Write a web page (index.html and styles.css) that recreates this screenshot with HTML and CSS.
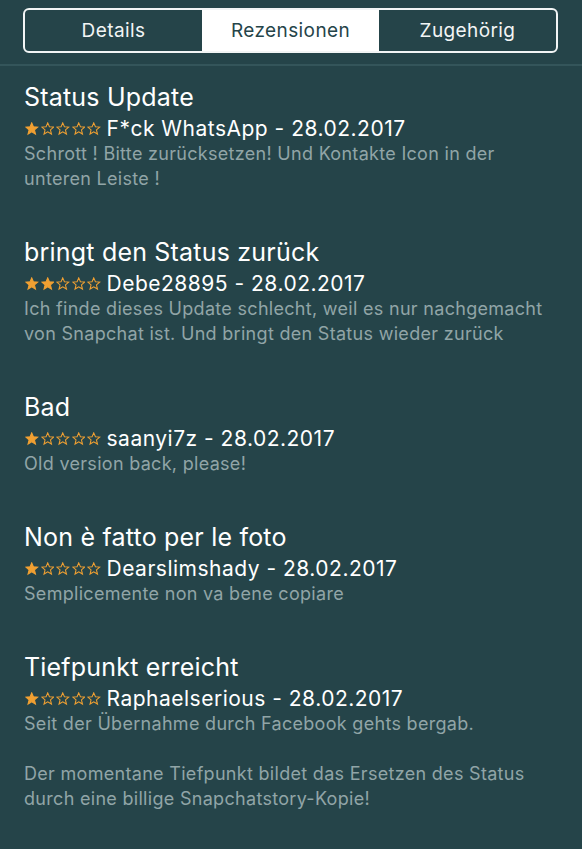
FILE: index.html
```html
<!DOCTYPE html>
<html lang="de">
<head>
    <meta charset="UTF-8">
    <meta name="viewport" content="width=device-width, initial-scale=1.0">
    <title>Rezensionen</title>
    <link rel="stylesheet" href="styles.css">
</head>
<body>
    <svg width="0" height="0" class="defs">
        <defs>
            <path id="star" d="M6.5 0.8 L8.1 4.6 L12.2 4.9 L9.1 7.6 L10.1 11.6 L6.5 9.4 L2.9 11.6 L3.9 7.6 L0.8 4.9 L4.9 4.6 Z"/>
        </defs>
    </svg>

    <div class="header">
        <div class="segments">
            <div class="segment">Details</div>
            <div class="segment active">Rezensionen</div>
            <div class="segment">Zugehörig</div>
        </div>
    </div>

    <div class="reviews">
        <div class="review">
            <div class="title">Status Update</div>
            <div class="meta">
                <span class="stars">
                    <svg viewBox="0 0 13 13" class="full"><use href="#star"/></svg><svg viewBox="0 0 13 13"><use href="#star"/></svg><svg viewBox="0 0 13 13"><use href="#star"/></svg><svg viewBox="0 0 13 13"><use href="#star"/></svg><svg viewBox="0 0 13 13"><use href="#star"/></svg>
                </span>
                F*ck WhatsApp - 28.02.2017
            </div>
            <p class="text">Schrott ! Bitte zurücksetzen! Und Kontakte Icon in der unteren Leiste !</p>
        </div>

        <div class="review">
            <div class="title">bringt den Status zurück</div>
            <div class="meta">
                <span class="stars">
                    <svg viewBox="0 0 13 13" class="full"><use href="#star"/></svg><svg viewBox="0 0 13 13" class="full"><use href="#star"/></svg><svg viewBox="0 0 13 13"><use href="#star"/></svg><svg viewBox="0 0 13 13"><use href="#star"/></svg><svg viewBox="0 0 13 13"><use href="#star"/></svg>
                </span>
                Debe28895 - 28.02.2017
            </div>
            <p class="text">Ich finde dieses Update schlecht, weil es nur nachgemacht von Snapchat ist. Und bringt den Status wieder zurück</p>
        </div>

        <div class="review">
            <div class="title">Bad</div>
            <div class="meta">
                <span class="stars">
                    <svg viewBox="0 0 13 13" class="full"><use href="#star"/></svg><svg viewBox="0 0 13 13"><use href="#star"/></svg><svg viewBox="0 0 13 13"><use href="#star"/></svg><svg viewBox="0 0 13 13"><use href="#star"/></svg><svg viewBox="0 0 13 13"><use href="#star"/></svg>
                </span>
                saanyi7z - 28.02.2017
            </div>
            <p class="text">Old version back, please!</p>
        </div>

        <div class="review">
            <div class="title">Non è fatto per le foto</div>
            <div class="meta">
                <span class="stars">
                    <svg viewBox="0 0 13 13" class="full"><use href="#star"/></svg><svg viewBox="0 0 13 13"><use href="#star"/></svg><svg viewBox="0 0 13 13"><use href="#star"/></svg><svg viewBox="0 0 13 13"><use href="#star"/></svg><svg viewBox="0 0 13 13"><use href="#star"/></svg>
                </span>
                Dearslimshady - 28.02.2017
            </div>
            <p class="text">Semplicemente non va bene copiare</p>
        </div>

        <div class="review">
            <div class="title">Tiefpunkt erreicht</div>
            <div class="meta">
                <span class="stars">
                    <svg viewBox="0 0 13 13" class="full"><use href="#star"/></svg><svg viewBox="0 0 13 13"><use href="#star"/></svg><svg viewBox="0 0 13 13"><use href="#star"/></svg><svg viewBox="0 0 13 13"><use href="#star"/></svg><svg viewBox="0 0 13 13"><use href="#star"/></svg>
                </span>
                Raphaelserious - 28.02.2017
            </div>
            <p class="text">Seit der Übernahme durch Facebook gehts bergab.</p>
            <p class="text">Der momentane Tiefpunkt bildet das Ersetzen des Status durch eine billige Snapchatstory-Kopie!</p>
        </div>
    </div>
</body>
</html>
```

FILE: styles.css
```css
body {
    margin: 0;
    background-color: #254449;
    font-family: Inter, "Noto Sans", sans-serif;
    color: #fff;
}
.defs {
    position: absolute;
}
.header {
    padding: 8px 24px 11px 23px;
    border-bottom: 2px solid #34555a;
}
.segments {
    display: flex;
    height: 41px;
    border: 2px solid #f2f5f5;
    border-radius: 6px;
    overflow: hidden;
}
.segment {
    flex: 1;
    display: flex;
    align-items: center;
    justify-content: center;
    font-size: 19px;
    letter-spacing: 0.4px;
    color: #f2f5f5;
}
.segment.active {
    background-color: #fff;
    color: #254449;
}
.reviews {
    padding: 16px 24px 0 24px;
}
.review {
    margin-bottom: 46px;
}
.title {
    font-size: 25px;
    line-height: 31px;
    letter-spacing: 0.2px;
}
.meta {
    display: flex;
    align-items: center;
    margin-top: 3px;
    font-size: 21px;
    line-height: 25px;
    letter-spacing: 0.5px;
}
.stars {
    display: flex;
    gap: 2px;
    margin: 1px 6px 0 1px;
}
.stars svg {
    width: 13.5px;
    height: 13.5px;
    fill: none;
    stroke: #f0a032;
    stroke-width: 1;
}
.stars svg.full {
    fill: #f0a032;
}
.text {
    margin: 0;
    font-size: 18px;
    line-height: 25px;
    letter-spacing: 0.3px;
    color: #91a5a7;
}
.text + .text {
    margin-top: 25px;
}
```
